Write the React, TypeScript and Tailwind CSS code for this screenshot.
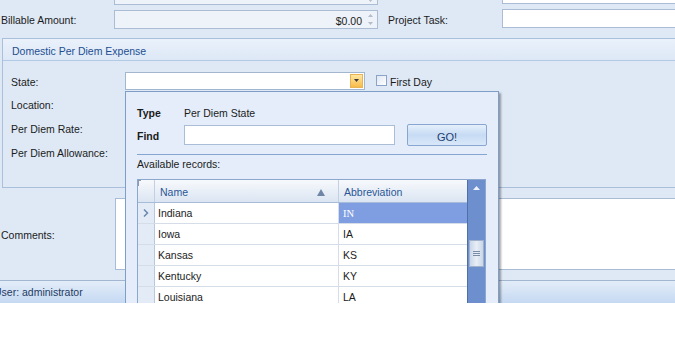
import React from "react";

const rows = [
  { name: "Indiana", abbr: "IN", sel: true },
  { name: "Iowa", abbr: "IA" },
  { name: "Kansas", abbr: "KS" },
  { name: "Kentucky", abbr: "KY" },
  { name: "Louisiana", abbr: "LA" },
];

function T({ children }: { children: React.ReactNode }) {
  return <span className="relative top-[2px]">{children}</span>;
}

function Spin() {
  return (
    <div className="absolute right-[4px] top-0 bottom-0 flex flex-col justify-center gap-[5px]">
      <svg width="5" height="3" viewBox="0 0 5 3"><path d="M2.5 0 L5 3 L0 3 Z" fill="#b3bcc8" /></svg>
      <svg width="5" height="3" viewBox="0 0 5 3"><path d="M0 0 L5 0 L2.5 3 Z" fill="#b3bcc8" /></svg>
    </div>
  );
}

export default function App() {
  return (
    <div className="w-[675px] h-[349px] bg-white overflow-hidden font-['Liberation_Sans',Arial,sans-serif] text-[10.5px] text-[#1b1b1b]">
      <div className="relative h-[303px] bg-[#dfe9f5] overflow-hidden flex flex-col">
        {/* top (cut) row */}
        <div className="flex h-[20px] -mt-[15px] shrink-0">
          <div className="relative ml-[114px] w-[264px] h-[20px] border border-[#abbdd5] bg-[#eef3f9] shrink-0">
            <div className="absolute right-[4px] bottom-[2px]">
              <svg width="5" height="3" viewBox="0 0 5 3"><path d="M0 0 L5 0 L2.5 3 Z" fill="#b3bcc8" /></svg>
            </div>
          </div>
          <div className="ml-[124px] w-[200px] h-[19px] border border-[#abbdd5] bg-white shrink-0" />
        </div>

        {/* billable row */}
        <div className="flex h-[20px] mt-[4px] shrink-0">
          <div className="w-[114px] pl-[1px] self-center shrink-0"><T>Billable Amount:</T></div>
          <div className="relative mt-[1px] w-[264px] h-[19px] border border-[#abbdd5] bg-[#eef3f9] shrink-0 flex items-center justify-end pr-[15px]">
            <T>$0.00</T>
            <Spin />
          </div>
          <div className="ml-[10px] w-[114px] self-center shrink-0"><T>Project Task:</T></div>
          <div className="w-[200px] h-[19px] border border-[#abbdd5] bg-white shrink-0" />
        </div>

        {/* group box */}
        <div className="mt-[9px] ml-[2px] w-[700px] h-[150px] border border-[#a9bfdc] shrink-0 flex flex-col">
          <div className="h-[22px] border-b border-[#b4c9e4] bg-gradient-to-b from-[#eaf1fb] to-[#dde8f6] flex items-center pl-[9px] text-[#1d4f91]">
            <T>Domestic Per Diem Expense</T>
          </div>
          <div className="pt-[8px] flex flex-col">
            <div className="h-[23px] flex items-center">
              <div className="w-[122px] pl-[8px] shrink-0"><T>State:</T></div>
              <div className="w-[240px] h-[18px] bg-white border border-[#a3b6d0] flex justify-end items-start shrink-0">
                <div className="mt-[1px] mr-[1px] w-[13px] h-[14px] bg-gradient-to-b from-[#ffe7a0] to-[#f6bb45] border border-[#e9b455] flex items-center justify-center">
                  <svg width="5" height="3" viewBox="0 0 5 3"><path d="M0 0 L5 0 L2.5 3 Z" fill="#3a3a3a" /></svg>
                </div>
              </div>
              <div className="ml-[11px] w-[11px] h-[11px] border border-[#8aa3c6] bg-gradient-to-br from-[#dfe7f2] to-white shrink-0" />
              <div className="ml-[3px]"><T>First Day</T></div>
            </div>
            <div className="h-[24px] flex items-center pl-[8px]"><T>Location:</T></div>
            <div className="h-[24px] flex items-center pl-[8px]"><T>Per Diem Rate:</T></div>
            <div className="h-[24px] flex items-center pl-[8px]"><T>Per Diem Allowance:</T></div>
          </div>
        </div>

        {/* comments */}
        <div className="mt-[10px] flex h-[72px] shrink-0">
          <div className="w-[115px] pl-[1px] self-center shrink-0"><T>Comments:</T></div>
          <div className="w-[600px] h-full bg-white border border-[#a9bcd5] shrink-0" />
        </div>

        {/* status bar */}
        <div className="mt-[10px] h-[23px] border-t border-[#a2b6d2] bg-gradient-to-b from-[#e3edf9] to-[#c5d9f2] flex items-center shrink-0 text-[#1f3a63]">
          <span className="relative top-[1px] -ml-[6px]">User: administrator</span>
        </div>

        {/* popup */}
        <div className="absolute left-[125px] top-[91px] w-[374px] h-[260px] bg-[#e4edf9] border border-[#7e9dc7] shadow-[2px_2px_2px_rgba(0,0,0,0.35)] flex flex-col px-[11px]">
          <div className="mt-[10px] h-[20px] flex items-center">
            <div className="w-[47px] font-bold shrink-0"><T>Type</T></div>
            <div><T>Per Diem State</T></div>
          </div>
          <div className="mt-[2px] h-[22px] flex items-center">
            <div className="w-[47px] font-bold shrink-0"><T>Find</T></div>
            <div className="w-[211px] h-[20px] bg-white border border-[#a9bdd7] shrink-0" />
            <div className="ml-[12px] w-[80px] h-[22px] rounded-[2px] border border-[#88a6d0] bg-gradient-to-b from-[#e6f0fb] via-[#c6dbf4] to-[#d9e8f9] flex items-center justify-center text-[#1e3e6e] text-[11px] shrink-0">
              <T>GO!</T>
            </div>
          </div>
          <div className="mt-[8px] w-[350px] h-[1px] bg-[#86a6d2] shrink-0" />
          <div className="h-[15px] leading-[15px]"><T>Available records:</T></div>
          <div className="mt-[9px] w-[349px] border border-[#8ca7cd] bg-white flex shrink-0">
            <div className="w-[329px] flex flex-col">
              <div className="h-[23px] flex border-b border-[#a7bcd8] bg-gradient-to-b from-[#f7f9fc] to-[#dbe5f2]">
                <div className="w-[17px] border-r border-[#c2d0e3] shrink-0 relative">
                  <div className="absolute left-0 top-0 w-[3px] h-[6px] border-l border-t border-[#8c9bb0]" />
                </div>
                <div className="w-[184px] border-r border-[#c2d0e3] flex items-center justify-between pl-[5px] pr-[13px] text-[#2a5696] shrink-0">
                  <T>Name</T>
                  <svg className="relative top-[1px]" width="8" height="7" viewBox="0 0 8 7"><path d="M4 0 L8 7 L0 7 Z" fill="#6f86a6" /></svg>
                </div>
                <div className="w-[128px] flex items-center pl-[5px] text-[#2a5696] shrink-0"><T>Abbreviation</T></div>
              </div>
              {rows.map((r) => (
                <div key={r.name} className="h-[21px] flex border-b border-[#d5dde9] shrink-0">
                  <div className="w-[17px] bg-[#e3ebf6] border-r border-[#b8c9df] flex items-center justify-center shrink-0">
                    {r.sel && (
                      <svg width="6" height="8" viewBox="0 0 6 8"><path d="M1 0.5 L4.5 4 L1 7.5" stroke="#6b87ad" strokeWidth="1.5" fill="none" /></svg>
                    )}
                  </div>
                  <div className="w-[184px] border-r border-[#d5dde9] flex items-center pl-[3px] shrink-0">
                    <span className="relative top-[1px]">{r.name}</span>
                  </div>
                  <div
                    className={
                      r.sel
                        ? "w-[128px] flex items-center pl-[4px] bg-[#7f9ee1] text-white font-['Liberation_Serif',serif] shrink-0"
                        : "w-[128px] flex items-center pl-[4px] shrink-0"
                    }
                  >
                    <span className="relative top-[1px]">{r.abbr}</span>
                  </div>
                </div>
              ))}
            </div>
            <div className="w-[18px] bg-[#6d8fcd] border-l border-[#4f6fa8] relative shrink-0">
              <div className="h-[15px] flex items-center justify-center">
                <svg width="7" height="4" viewBox="0 0 7 4"><path d="M3.5 0 L7 4 L0 4 Z" fill="#eef3fb" /></svg>
              </div>
              <div className="absolute left-[1px] right-[1px] top-[60px] h-[27px] bg-gradient-to-r from-[#c9d6e8] via-[#e8eef6] to-[#c9d6e8] border border-[#9fb1cb] flex flex-col items-center justify-center gap-[1px]">
                <div className="w-[7px] h-[1px] bg-[#7b8ca6]" />
                <div className="w-[7px] h-[1px] bg-[#7b8ca6]" />
                <div className="w-[7px] h-[1px] bg-[#7b8ca6]" />
              </div>
            </div>
          </div>
        </div>
      </div>
    </div>
  );
}
